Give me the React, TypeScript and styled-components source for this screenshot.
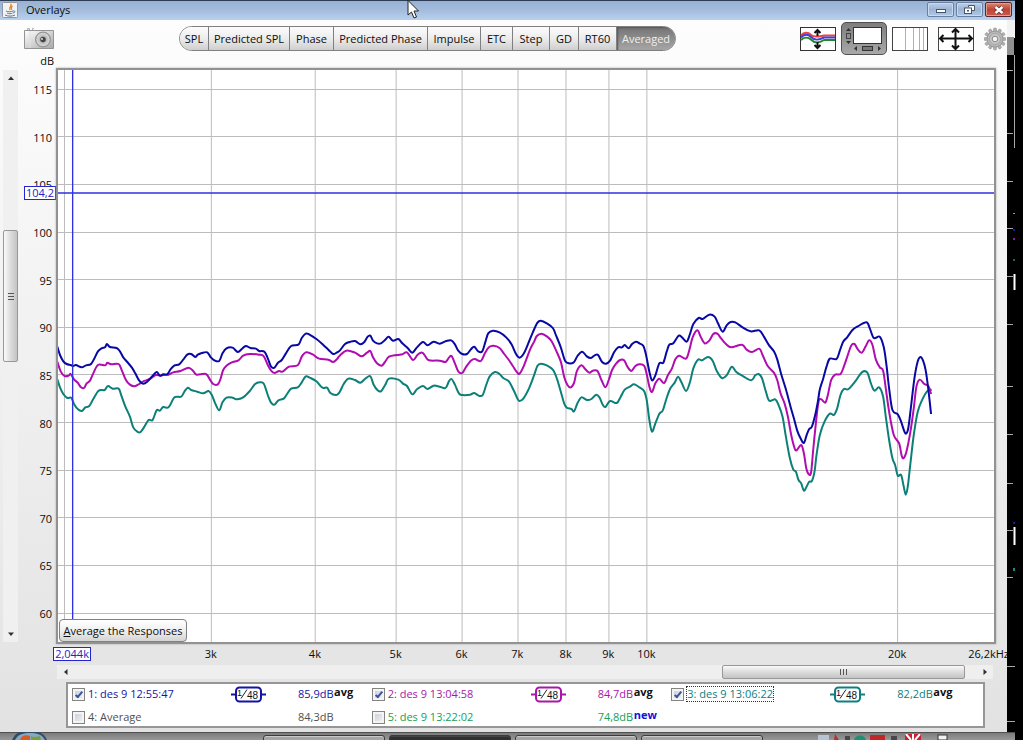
import React from "react";
import styled, { createGlobalStyle, css } from "styled-components";

const GlobalStyle = createGlobalStyle`
  *, *::before, *::after { box-sizing: border-box; }
  body {
    margin: 0;
    background: #000;
    color: #0c0c0c;
    font: 11px/14px "Open Sans", "Noto Sans", sans-serif;
  }
  button, input { font: inherit; color: inherit; margin: 0; padding: 0; }
`;

/* ---------- data ---------- */

type Band = { x: number; y: number; points: number[] };
type Trace = { color: string; bands: Band[] };

/* Samples are stored per band as x,y pairs in thirds of a pixel, relative to the band's origin. */
const PLOT_W = 2811;
const PLOT_H = 1716;

const band = (x: number, y: number, points: number[]): Band => ({ x, y, points });
const low = (...p: number[]) => band(-24, 720, p);
const mid = (...p: number[]) => band(846, 720, p);
const high = (...p: number[]) => band(1746, 690, p);

const traces: Trace[] = [
  {
    color: "#0c8078",
    bands: [
      low(22,208,30,232,40,252,52,264,64,263,72,282,84,298,96,303,106,292,118,288,130,267,146,242,164,240,174,228,188,236,206,236,214,256,226,289,240,320,250,352,262,365,272,366,284,349,296,330,308,330,320,301,330,302,340,291,356,292,374,262,394,260,404,244,414,233,424,240,442,245,460,250,476,243,486,255,496,280,508,301,518,277,530,263,548,263,562,268,580,262,600,243,616,222,630,217,642,221,654,255,664,278,674,284,686,271,702,266,712,252,724,236,744,232,756,217,768,199,780,203,800,214,818,233,832,233,842,249,860,255),
      mid(0,246,12,222,26,206,46,210,62,218,78,205,92,199,102,224,114,241,124,244,136,226,148,206,176,209,190,221,202,228,218,253,232,238,250,228,264,237,282,227,300,230,318,234,328,214,336,207,346,224,358,250,368,255,392,254,404,249,420,258,430,254,440,225,450,200,466,186,480,192,492,205,508,214,522,240,534,266,540,273,552,265,570,232,584,195,594,167,604,161,622,166,640,179,652,205,664,245,674,280,682,293,696,297,704,304,714,280,726,262,742,270,756,267,770,254,780,262,790,284,798,291,812,273,832,279,844,260,856,239,872,230,884,223),
      high(0,262,14,273,22,300,30,360,38,395,48,370,60,341,70,332,80,300,92,267,106,248,116,230,126,246,140,273,152,246,162,205,176,179,188,181,206,171,220,182,232,212,248,234,262,226,274,204,280,201,292,217,312,229,336,241,348,226,358,222,368,234,380,275,390,302,408,298,418,315,430,350,440,410,452,475,462,508,470,515,478,540,486,550,494,572,502,560,510,545,518,543,526,515,532,465,542,405,556,365,572,341,584,345,594,325,604,285,614,267,628,267,650,242,668,217,684,217,696,252,706,272,720,262,732,290,740,350,750,420,760,475,768,495,776,527,786,525,794,560,800,584,806,560,814,490,824,405,836,335,850,298,866,272,878,269),
    ],
  },
  {
    color: "#b00cb0",
    bands: [
      low(22,155,32,184,44,198,56,197,62,192,72,208,84,219,92,231,102,234,110,220,120,212,130,190,144,165,166,166,172,158,184,163,206,162,216,182,228,210,240,224,254,229,268,222,280,214,300,207,318,195,332,197,344,194,356,194,370,187,392,183,416,173,430,183,440,194,468,192,480,208,490,222,504,223,512,207,520,180,530,167,546,157,566,151,580,137,600,132,628,134,642,139,654,165,664,182,674,189,688,183,698,185,718,170,744,166,756,140,770,127,790,134,808,146,836,149,850,156,862,147),
      mid(0,137,20,122,46,128,66,139,82,128,92,123,100,142,112,160,126,167,136,156,148,140,172,135,188,133,202,127,220,150,234,134,248,128,258,140,268,151,300,152,318,156,328,143,336,138,346,160,356,184,368,189,380,170,394,152,406,147,424,153,436,130,448,112,462,107,480,114,494,132,508,150,520,168,532,186,540,191,552,170,572,118,584,95,592,78,606,71,622,79,636,93,650,122,664,155,674,200,684,225,694,232,704,218,712,184,726,166,738,178,750,188,760,182,774,183,786,210,798,232,808,210,818,180,830,161,842,150,854,151,864,170,876,183,888,168),
      high(0,193,14,197,22,222,30,260,38,276,48,250,60,236,74,249,86,225,98,205,108,178,120,167,140,176,150,150,160,112,174,91,184,110,196,130,210,122,222,102,234,101,246,116,260,132,276,142,308,134,322,149,338,156,360,146,370,165,386,199,404,218,414,240,424,280,436,310,446,350,456,405,466,444,472,451,486,435,494,460,502,508,510,524,516,515,522,450,530,370,538,305,546,298,558,308,566,285,576,240,588,224,604,222,614,200,626,165,636,137,646,132,656,148,668,158,680,138,690,121,700,135,710,178,722,202,732,212,740,265,750,335,764,405,780,430,788,468,794,474,802,455,814,395,824,325,832,260,842,239,856,252,868,258,876,282),
    ],
  },
  {
    color: "#0808a4",
    bands: [
      low(22,110,30,135,40,154,50,162,62,165,70,168,78,165,95,172,108,166,122,163,132,148,144,124,155,115,165,112,171,102,180,111,200,114,210,124,220,142,232,156,246,173,256,190,268,212,280,221,292,215,306,200,320,186,330,197,340,193,352,193,362,178,374,166,388,163,400,149,412,134,424,132,436,141,444,134,456,129,472,127,482,141,492,150,508,153,518,130,530,115,548,113,564,126,576,117,588,108,602,114,618,116,628,123,644,125,654,145,664,170,674,173,684,159,696,150,708,131,724,108,746,104,756,84,768,71,778,73,800,87,820,104,836,119,850,132,862,127),
      mid(0,122,16,102,30,96,46,93,62,103,74,96,84,80,92,77,100,92,112,100,124,100,136,90,147,80,160,92,176,87,188,100,204,114,218,128,232,112,250,96,264,106,282,95,300,101,320,93,335,91,346,103,356,122,368,132,382,132,394,118,404,110,416,124,428,124,438,94,446,70,460,62,480,67,500,82,516,103,530,133,540,143,552,132,564,106,580,67,594,38,604,32,622,40,640,54,650,77,664,112,674,145,682,158,702,158,714,138,728,125,742,139,754,144,766,136,776,135,788,156,800,161,812,152,824,127,836,112,848,112,856,105,868,115,878,102,890,95),
      high(0,130,12,138,20,165,30,215,38,241,48,226,60,190,72,188,82,155,90,134,102,130,118,107,128,112,142,125,152,102,162,72,178,54,190,57,210,44,226,50,236,70,250,95,262,76,274,66,288,67,310,82,334,94,360,91,374,110,388,134,404,154,414,178,426,223,440,268,454,320,464,355,474,392,484,415,494,429,502,406,510,387,518,380,528,345,536,305,542,268,552,236,562,200,572,176,592,177,602,152,612,125,624,112,640,90,656,79,682,67,692,85,704,114,722,110,734,142,742,195,750,265,760,330,776,343,786,365,796,395,802,400,808,382,816,318,826,235,836,184,844,171,852,182,860,212,868,270,876,342),
    ],
  },
];

const curvePath = (bands: Band[]) => {
  const pts: [number, number][] = [];
  bands.forEach((b) => {
    for (let i = 0; i < b.points.length; i += 2) pts.push([b.points[i] + b.x, b.points[i + 1] + b.y]);
  });
  let d = `M${pts[0][0]} ${pts[0][1]}`;
  for (let i = 0; i < pts.length - 1; i++) {
    const p0 = pts[Math.max(i - 1, 0)];
    const [p1, p2] = [pts[i], pts[i + 1]];
    const p3 = pts[Math.min(i + 2, pts.length - 1)];
    d += `C${p1[0] + (p2[0] - p0[0]) / 6} ${p1[1] + (p2[1] - p0[1]) / 6} ${p2[0] - (p3[0] - p1[0]) / 6} ${p2[1] - (p3[1] - p1[1]) / 6} ${p2[0]} ${p2[1]}`;
  }
  return d;
};

/* Axis scales, as fractions of the plot area */
const freqPos = (kHz: number) => (589 + 251 * Math.log2(kHz / 10)) / 937;
const levelPos = (dB: number) => (544 - (dB - 60) * 9.524) / 572;
const pct = (f: number) => `${f * 100}%`;

const freqs = [3, 4, 5, 6, 7, 8, 9, 10, 20];
const levels = [115, 110, 105, 100, 95, 90, 85, 80, 75, 70, 65, 60];
const CURSOR_KHZ = 2.044;
const CURSOR_DB = 104.2;

const tabs: [string, number][] = [
  ["SPL", 29], ["Predicted SPL", 81], ["Phase", 44], ["Predicted Phase", 94], ["Impulse", 53],
  ["ETC", 32], ["Step", 37], ["GD", 29], ["RT60", 38], ["Averaged", 58],
];

type Measurement = {
  name: string; level: string; color: string; checked: boolean;
  smoothed?: boolean; tag?: string; tagColor?: string; focused?: boolean;
};
const measurements: Measurement[] = [
  { name: "1: des 9 12:55:47", level: "85,9dB", color: "#1414a4", checked: true, smoothed: true, tag: "avg" },
  { name: "2: des 9 13:04:58", level: "84,7dB", color: "#a818a8", checked: true, smoothed: true, tag: "avg" },
  { name: "3: des 9 13:06:22", level: "82,2dB", color: "#0c8080", checked: true, smoothed: true, tag: "avg", focused: true },
  { name: "4: Average", level: "84,3dB", color: "#505050", checked: false },
  { name: "5: des 9 13:22:02", level: "74,8dB", color: "#18a054", checked: false, tag: "new", tagColor: "#1010d8" },
];

/* ---------- frame ---------- */

const Desktop = styled.div`
  display: flex;
  flex-direction: column;
  min-height: 100vh;
  overflow: hidden;
  position: relative;
  background: #000;
`;

const TitleBar = styled.header`
  display: flex;
  align-items: center;
  height: 20px;
  margin-right: 8px;
  padding: 0 3px 1px 2px;
  border-top: 1px solid #2c3c54;
  background: linear-gradient(#98b2d4, #a4bddd 50%, #b8d1ee);
`;

const Title = styled.h1`
  flex: 1;
  margin: 0 0 0 8px;
  font-size: 11px;
  line-height: 16px;
  font-weight: 400;
`;

const WindowButton = styled.button<{ $close?: boolean }>`
  display: flex;
  align-items: center;
  justify-content: center;
  width: 27px;
  height: 15px;
  margin: 0 0 1px 2px;
  border: 1px solid ${(p) => (p.$close ? "#5c2430" : "#6880a4")};
  border-radius: 2px;
  box-shadow: inset 0 0 0 1px ${(p) => (p.$close ? "#e0a08c" : "#c8daf0")};
  background: ${(p) =>
    p.$close ? "linear-gradient(#d88870, #c04438 50%, #c85c50)" : "linear-gradient(#bccfe8, #9cb4d4 50%, #b0c8e6)"};
`;

const Workspace = styled.div`
  display: flex;
  flex: 1;
`;

const Panel = styled.main`
  display: flex;
  flex-direction: column;
  flex: 1;
  min-width: 0;
  overflow: hidden;
  background: linear-gradient(#fdfdfd, #f8f8f8 20%, #e2e2e2);
`;

const Behind = styled.svg`
  flex: none;
  width: 16px;
  height: 712px;
`;

const Taskbar = styled.footer`
  position: relative;
  display: flex;
  gap: 4px;
  height: 8px;
  margin-right: 8px;
  padding: 2px 0 0 263px;
  border-top: 1px solid #505050;
  background: linear-gradient(#7c7c7c, #989898);
`;

const Task = styled.button<{ $active?: boolean }>`
  width: 122px;
  height: 8px;
  border: 1px solid #3c3c3c;
  border-radius: 3px 3px 0 0;
  box-shadow: inset 0 1px 0 ${(p) => (p.$active ? "#444" : "#c8c8c8")};
  background: ${(p) => (p.$active ? "#303030" : "#a4a4a4")};
`;

const StartOrb = styled.svg`
  position: absolute;
  left: 12px;
  bottom: 0;
`;

const Tray = styled.svg`
  position: absolute;
  right: 60px;
  bottom: 0;
`;

const Pointer = styled.svg`
  position: absolute;
  left: 407px;
  top: 0;
`;

/* ---------- toolbar ---------- */

const Toolbar = styled.nav`
  display: flex;
  align-items: center;
  justify-content: space-between;
  height: 36px;
  padding: 1px 1px 0 23px;
`;

const IconButton = styled.button<{ $pressed?: boolean }>`
  display: flex;
  align-items: center;
  justify-content: center;
  height: 33px;
  border: 0;
  background: none;
  ${(p) =>
    p.$pressed &&
    css`
      width: 46px;
      border: 1px solid #505050;
      border-radius: 5px;
      background: linear-gradient(#7e7e7e, #a8a8a8);
    `}
`;

const IconGroup = styled.div`
  display: flex;
  align-items: center;
  gap: 5px;
`;

const ViewIcons = styled(IconGroup)`
  gap: 10px;
`;

const TabGroup = styled.div`
  display: flex;
  height: 25px;
  border: 1px solid #808080;
  border-radius: 13px;
  overflow: hidden;
`;

const Tab = styled.button<{ $width: number; $active?: boolean }>`
  width: ${(p) => p.$width}px;
  border: 0;
  border-right: 1px solid #808080;
  text-align: center;
  white-space: nowrap;
  background: linear-gradient(#fcfcfc, #ececec 50%, #cfcfcf);
  &:last-child { border-right: 0; }
  ${(p) =>
    p.$active &&
    css`
      color: #eee;
      background: linear-gradient(#747474, #a6a6a6);
      box-shadow: inset 1px 1px 2px #555;
    `}
`;

/* ---------- chart ---------- */

const Chart = styled.section`
  display: grid;
  flex: 1;
  grid-template-columns: 20px 36px 1fr 11px;
  grid-template-rows: 12px 1fr 20px 16px;
`;

const AxisTitle = styled.div`
  grid-area: 1 / 2;
  padding-right: 2px;
  margin-top: -2px;
  text-align: right;
`;

const LevelScroll = styled.div`
  grid-area: 2 / 1;
  position: relative;
  margin: 2px 2px 2px 3px;
  background: #f0f0f0;
`;

const FreqScroll = styled.div`
  grid-area: 4 / 3;
  position: relative;
  margin: 1px 3px 1px 1px;
  background: #efefef;
`;

const ScrollThumb = styled.div<{ $vertical?: boolean }>`
  position: absolute;
  display: flex;
  align-items: center;
  justify-content: center;
  border: 1px solid #989898;
  border-radius: 2px;
  ${(p) =>
    p.$vertical
      ? css`
          inset: 28% 0 49% 0;
          background: linear-gradient(90deg, #fafafa, #dcdcdc 50%, #c4c4c4);
        `
      : css`
          inset: 0 3% 0 71%;
          background: linear-gradient(#fafafa, #dcdcdc 50%, #c4c4c4);
        `}
`;

const ScrollArrow = styled.button<{ $side: "top" | "bottom" | "left" | "right" }>`
  position: absolute;
  display: flex;
  align-items: center;
  justify-content: center;
  width: 15px;
  height: 14px;
  border: 0;
  background: none;
  ${(p) => p.$side}: 1px;
`;

const LevelAxis = styled.div`
  grid-area: 2 / 2;
  position: relative;
  margin: 2px 0;
`;

const FreqAxis = styled.div`
  grid-area: 3 / 3;
  position: relative;
  margin: 0 2px;
`;

const LevelTick = styled.span`
  position: absolute;
  right: 4px;
  transform: translateY(-50%);
`;

const FreqTick = styled.span`
  position: absolute;
  top: 3px;
  transform: translateX(-50%);
`;

const FreqEnd = styled.span`
  position: absolute;
  top: 3px;
  right: -15px;
`;

const readout = css`
  border: 1px solid #2424d0;
  background: #fff;
  color: #2424c4;
  line-height: 12px;
  text-align: center;
`;

const LevelReadout = styled.output`
  position: absolute;
  right: 0;
  width: 32px;
  transform: translateY(-50%);
  ${readout}
`;

const FreqReadout = styled.output`
  position: absolute;
  top: 3px;
  width: 38px;
  transform: translateX(-50%);
  ${readout}
`;

const PlotFrame = styled.div`
  grid-area: 2 / 3;
  position: relative;
  border: 2px solid #929292;
  background: #fff;
  box-shadow: 0 0 2px #aaa;
`;

const Plot = styled.svg`
  position: absolute;
  width: 100%;
  height: 100%;
`;

const AverageButton = styled.button`
  position: absolute;
  left: 1px;
  bottom: 0;
  height: 23px;
  width: 128px;
  border: 1px solid #808080;
  border-radius: 4px;
  background: linear-gradient(#fff, #f0f0f0 50%, #d4d4d4);
`;

/* ---------- legend ---------- */

const Legend = styled.section`
  display: grid;
  grid-template-columns: repeat(3, 1fr);
  grid-template-rows: 20px 21px;
  height: 46px;
  margin: 2px 22px 4px 66px;
  padding: 0 12px 0 4px;
  border: 2px solid #969696;
  background: #fff;
`;

const Entry = styled.div<{ $color: string }>`
  display: flex;
  align-items: center;
  height: 20px;
  color: ${(p) => p.$color};
`;

const EntryRow2 = styled(Entry)`
  margin-top: 3px;
`;

const EntryLabel = styled.label<{ $focused?: boolean }>`
  display: flex;
  align-items: center;
  gap: 3px;
  width: 159px;
  white-space: nowrap;
  span {
    outline: ${(p) => (p.$focused ? "1px dotted #333" : "none")};
  }
`;

const Check = styled.input`
  appearance: none;
  position: relative;
  width: 13px;
  height: 13px;
  border: 1px solid #848484;
  box-shadow: inset 0 0 0 2px #f4f4f4;
  background: linear-gradient(135deg, #c4ccd8, #f4f4f4);
  &:checked::after {
    content: "";
    position: absolute;
    left: 4px;
    top: 1px;
    width: 4px;
    height: 8px;
    border: solid #3c54a0;
    border-width: 0 2px 2px 0;
    transform: rotate(40deg);
  }
`;

const SmoothingSlot = styled.div`
  width: 67px;
  height: 17px;
`;

const Tag = styled.b<{ $color?: string }>`
  align-self: flex-start;
  color: ${(p) => p.$color || "#111"};
  font-weight: 700;
  line-height: 16px;
`;

const Level = styled.span`
  width: 36px;
  white-space: nowrap;
`;

const Smoothing = ({ color }: { color: string }) => (
  <svg width="35" height="17" aria-label="1/48 octave smoothing">
    <path d="M0 8.5H5M30 8.5H35" stroke={color} strokeWidth="2" />
    <rect x="5" y="1.5" width="25" height="14" rx="3.5" fill="#fff" stroke={color} strokeWidth="2" />
    <text x="6" y="10" fontSize="9" fontFamily="Liberation Sans, sans-serif" fill="#111">1</text>
    <path d="M10 12.5L16 3.5" stroke="#222" />
    <text x="16" y="13" fontSize="10" fontFamily="Liberation Sans, sans-serif" fill="#111">48</text>
  </svg>
);

const CameraIcon = () => (
  <svg width="32" height="24" viewBox="0 0 32 24">
    <defs>
      <linearGradient id="body" x2="1" y2="1"><stop stopColor="#fff" /><stop offset="1" stopColor="#a8a8a8" /></linearGradient>
      <radialGradient id="lens"><stop stopColor="#333" /><stop offset=".3" stopColor="#666" /><stop offset=".45" stopColor="#bbb" /><stop offset=".8" stopColor="#d6d6d6" /><stop offset="1" stopColor="#999" /></radialGradient>
    </defs>
    <path d="M4.500 3V1.500H6.500V3M9.500 3V1.500H11" fill="#ddd" stroke="#b4b4b4" />
    <path d="M1.500 3.500H30.500V21.500H1.500Z" fill="url(#body)" stroke="#949494" />
    <path d="M7 4V21" stroke="#e2e2e2" />
    <circle cx="20" cy="12.500" r="7.500" fill="url(#lens)" stroke="#929292" />
    <circle cx="20" cy="12.500" r="2.500" fill="#444" /><circle cx="19" cy="12" r="1" fill="#ddd" />
  </svg>
);

const TracesIcon = () => (
  <svg width="36" height="24">
    <rect x=".5" y=".5" width="35" height="23" fill="#fff" stroke="#333" />
    <g fill="none" strokeWidth="2">
      <path d="M1 8.500C4 5 8 5 11 8C14 11 20 9 24 8.500H35" stroke="#f04040" />
      <path d="M1 10.500C4 7 8 7 11 10C15 14 19 13 24 10.500H35" stroke="#4040d8" />
      <path d="M1 13C4 10 8 10 11 12.500C15 17 19 16 24 13H35" stroke="#208830" />
    </g>
    <path d="M17.500 3V9M17.500 15V21M14.500 6L17.500 3L20.500 6M14.500 18L17.500 21L20.500 18" stroke="#111" strokeWidth="2" fill="none" />
  </svg>
);

const ScrollbarsIcon = () => (
  <svg width="44" height="31">
    <rect x="11.500" y="4.500" width="28" height="16" fill="#fff" stroke="#333" />
    <path d="M4 8L6.500 5L9 8ZM4 18H9L6.500 21ZM15 23V28L12 25.500ZM36 23V28L39 25.500Z" fill="#333" />
    <rect x="4.500" y="10.500" width="4" height="5" fill="none" stroke="#444" />
    <rect x="20.500" y="23.500" width="10" height="4" fill="#777" stroke="#333" />
  </svg>
);

const GridIcon = () => (
  <svg width="36" height="24">
    <rect x=".5" y=".5" width="35" height="23" fill="#fff" stroke="#444" />
    <path d="M13.500 1V23M21.500 1V23M27.500 1V23M31.500 1V23" stroke="#b0b0b0" />
  </svg>
);

const MoveIcon = () => (
  <svg width="36" height="24">
    <rect x=".5" y=".5" width="35" height="23" fill="#fff" stroke="#444" />
    <path d="M2 11.500H34M17.500 2V22M5.500 8L2 11.500L5.500 15M30.500 8L34 11.500L30.500 15M14 5.500L17.500 2L21 5.500M14 18.500L17.500 22L21 18.500" fill="none" stroke="#111" strokeWidth="2" />
  </svg>
);

const GearIcon = () => (
  <svg width="22" height="24" viewBox="-11 -12 22 24">
    {Array.from({ length: 12 }, (_, i) => (
      <rect key={i} x="-1.500" y="-11" width="3" height="5" rx="1" fill="#b0b0b0" stroke="#8c8c8c" strokeWidth=".5" transform={`rotate(${i * 30})`} />
    ))}
    <circle r="8" fill="#b8b8b8" stroke="#989898" />
    <circle r="5.500" fill="#c8c8c8" stroke="#a4a4a4" />
    <circle r="2.800" fill="#f4f4f4" stroke="#888" />
  </svg>
);

const JavaIcon = () => (
  <svg width="16" height="16">
    <rect x=".5" y=".5" width="15" height="15" rx="1" fill="#f2f2f0" stroke="#8c98a8" />
    <path d="M8.500 2C11 4 6 5 8 8M10.500 4C8.500 5.500 9.500 6 9.500 8" fill="none" stroke="#e08828" strokeWidth="1.3" />
    <path d="M4 9C6 10 9 10 11 9M5 11C7 12 9 12 10.500 11M3 13C6 14.500 10 14.500 13 13M11 9C14 8.500 13 11 11 11" fill="none" stroke="#58789c" />
  </svg>
);

const arrows = { top: "M1 6L4 2.500L7 6Z", bottom: "M1 2.500H7L4 6Z", left: "M5.500 1V7L2 4Z", right: "M2.500 1V7L6 4Z" };
const Arrow = ({ side }: { side: keyof typeof arrows }) => (
  <ScrollArrow $side={side} aria-label={`Scroll ${side}`}>
    <svg width="8" height="8"><path d={arrows[side]} fill="#303030" /></svg>
  </ScrollArrow>
);

const MeasurementEntry = ({ m, second }: { m: Measurement; second?: boolean }) => {
  const Row = second ? EntryRow2 : Entry;
  return (
    <Row $color={m.color}>
      <EntryLabel $focused={m.focused}>
        <Check type="checkbox" defaultChecked={m.checked} />
        <span>{m.name}</span>
      </EntryLabel>
      <SmoothingSlot>{m.smoothed && <Smoothing color={m.color} />}</SmoothingSlot>
      <Level>{m.level}</Level>
      {m.tag && <Tag $color={m.tagColor}>{m.tag}</Tag>}
    </Row>
  );
};

export default function App() {
  return (
    <>
      <GlobalStyle />
      <Desktop>
        <TitleBar>
          <JavaIcon />
          <Title>Overlays</Title>
          <WindowButton aria-label="Minimize">
            <svg width="12" height="9"><rect x="1.500" y="4.500" width="9" height="3" fill="#fff" stroke="#485468" /></svg>
          </WindowButton>
          <WindowButton aria-label="Restore">
            <svg width="13" height="11"><path d="M5.500 1.500H11.500V6.500H9M5.500 1.500V3" fill="#fff" stroke="#485468" /><rect x="1.500" y="4" width="7" height="5.500" fill="#fff" stroke="#485468" /><rect x="4" y="6" width="2" height="1.500" fill="#485468" /></svg>
          </WindowButton>
          <WindowButton $close aria-label="Close">
            <svg width="12" height="10"><path d="M2.500 2L9.500 8M9.500 2L2.500 8" stroke="#583038" strokeWidth="4" /><path d="M2.500 2L9.500 8M9.500 2L2.500 8" stroke="#fff" strokeWidth="2.400" /></svg>
          </WindowButton>
        </TitleBar>
        <Workspace>
          <Panel>
            <Toolbar>
              <IconButton aria-label="Capture image"><CameraIcon /></IconButton>
              <TabGroup>
                {tabs.map(([name, width]) => (
                  <Tab key={name} $width={width} $active={name === "Averaged"}>{name}</Tab>
                ))}
              </TabGroup>
              <ViewIcons>
                <IconGroup>
                  <IconButton aria-label="Separate traces"><TracesIcon /></IconButton>
                  <IconButton $pressed aria-label="Scrollbars"><ScrollbarsIcon /></IconButton>
                  <IconButton aria-label="Frequency axis"><GridIcon /></IconButton>
                </IconGroup>
                <IconButton aria-label="Graph limits"><MoveIcon /></IconButton>
                <IconButton aria-label="Graph controls"><GearIcon /></IconButton>
              </ViewIcons>
            </Toolbar>
            <Chart>
              <AxisTitle>dB</AxisTitle>
              <LevelScroll>
                <Arrow side="top" />
                <ScrollThumb $vertical>
                  <svg width="8" height="8"><path d="M1 1.500H7M1 4.500H7M1 7.500H7" stroke="#555" /></svg>
                </ScrollThumb>
                <Arrow side="bottom" />
              </LevelScroll>
              <LevelAxis>
                {levels.map((v) => <LevelTick key={v} style={{ top: pct(levelPos(v)) }}>{v}</LevelTick>)}
                <LevelReadout style={{ top: pct(levelPos(CURSOR_DB)) }}>104,2</LevelReadout>
              </LevelAxis>
              <PlotFrame>
                <Plot viewBox={`0 0 ${PLOT_W} ${PLOT_H}`} preserveAspectRatio="none">
                  <g stroke="#bcbcbc" strokeWidth="3">
                    {[2, ...freqs].map((f) => {
                      const x = Math.round(freqPos(f) * 937) * 3 + 1.5;
                      return <line key={f} x1={x} x2={x} y1="0" y2={PLOT_H} />;
                    })}
                    {levels.map((v) => {
                      const y = Math.floor(levelPos(v) * 572) * 3 - 1.5;
                      return <line key={v} x1="0" x2={PLOT_W} y1={y} y2={y} />;
                    })}
                  </g>
                  <g fill="none" strokeWidth="6" strokeLinejoin="round">
                    {traces.map((t) => <path key={t.color} d={curvePath(t.bands)} stroke={t.color} />)}
                  </g>
                  <path d={`M0 369H${PLOT_W}M44 0V${PLOT_H}`} stroke="#3030e0" strokeWidth="4" fill="none" />
                </Plot>
                <AverageButton><u>A</u>verage the Responses</AverageButton>
              </PlotFrame>
              <FreqAxis>
                {freqs.map((f) => <FreqTick key={f} style={{ left: pct(freqPos(f)) }}>{f}k</FreqTick>)}
                <FreqEnd>26,2kHz</FreqEnd>
                <FreqReadout style={{ left: pct(freqPos(CURSOR_KHZ)) }}>2,044k</FreqReadout>
              </FreqAxis>
              <FreqScroll>
                <Arrow side="left" />
                <ScrollThumb>
                  <svg width="8" height="8"><path d="M1.500 1V7M4.500 1V7M7.500 1V7" stroke="#555" /></svg>
                </ScrollThumb>
                <Arrow side="right" />
              </FreqScroll>
            </Chart>
            <Legend>
              {measurements.map((m, i) => <MeasurementEntry key={m.name} m={m} second={i > 2} />)}
            </Legend>
          </Panel>
          <Behind viewBox="0 20 16 712">
            <rect y="20" width="8" height="18" fill="#f2f2f2" />
            <rect y="37" width="7" height="18" fill="#909090" />
            <path d="M0 70.500H6M0 133.500H6M0 181.500H6M0 228.500H6M0 276.500H6M0 324.500H6M0 386.500H6M0 434.500H6M0 483.500H6M0 530.500H6M0 577.500H6M0 666.500H8M0 721.500H8M7.500 55V148" stroke="#a8a8a8" />
            <path d="M7.500 274V290M7.500 527V545" stroke="#fff" strokeWidth="2" />
            <g>
              <rect x="6" y="213" width="2" height="1" fill="#999" /><rect x="6" y="229" width="2" height="2" fill="#1818a8" />
              <rect x="6" y="238" width="2" height="2" fill="#981898" /><rect x="6" y="259" width="2" height="2" fill="#187030" />
              <rect x="6" y="522" width="2" height="2" fill="#1818a8" /><rect x="6" y="568" width="2" height="3" fill="#188888" />
            </g>
          </Behind>
        </Workspace>
        <Taskbar>
          <StartOrb width="36" height="9">
            <path d="M0 9C3 3 6 1 10 1H24C29 1 33 4 35 9Z" fill="#2c4c68" />
            <path d="M3 9C6 4 9 2 18 2S30 4 33 9Z" fill="#88a8c0" />
            <path d="M8 9C9 5 13 3 18 5V9Z" fill="#d85c28" /><path d="M19 5C23 7 25 5 28 5L29 9H19Z" fill="#78a040" />
          </StartOrb>
          <Task aria-label="Task 1" /><Task $active aria-label="Task 2" /><Task aria-label="Task 3" /><Task aria-label="Task 4" />
          <Tray width="138" height="6">
            <rect x="1" y="1" width="11" height="5" fill="#b8c4d4" /><path d="M18 0L22 6H17Z" fill="#b83030" />
            <rect x="28" y="2" width="5" height="4" fill="#484848" /><path d="M37 6C38 0 48 0 49 6Z" fill="#209070" />
            <rect x="53" y="1" width="15" height="5" fill="#c02828" /><rect x="74" y="2" width="6" height="4" fill="#484848" />
            <rect x="88" y="0" width="16" height="6" fill="#c82030" /><path d="M96 0V6M89 0L94 6M103 0L98 6" stroke="#fff" strokeWidth="2" />
            <rect x="121" y="1" width="9" height="5" fill="#f0f0f0" stroke="#334" />
          </Tray>
        </Taskbar>
        <Pointer width="13" height="20">
          <path d="M1 .5V15L4.500 12L7 18L9.500 17L7 11H11.500Z" fill="#fff" stroke="#222" />
        </Pointer>
      </Desktop>
    </>
  );
}
